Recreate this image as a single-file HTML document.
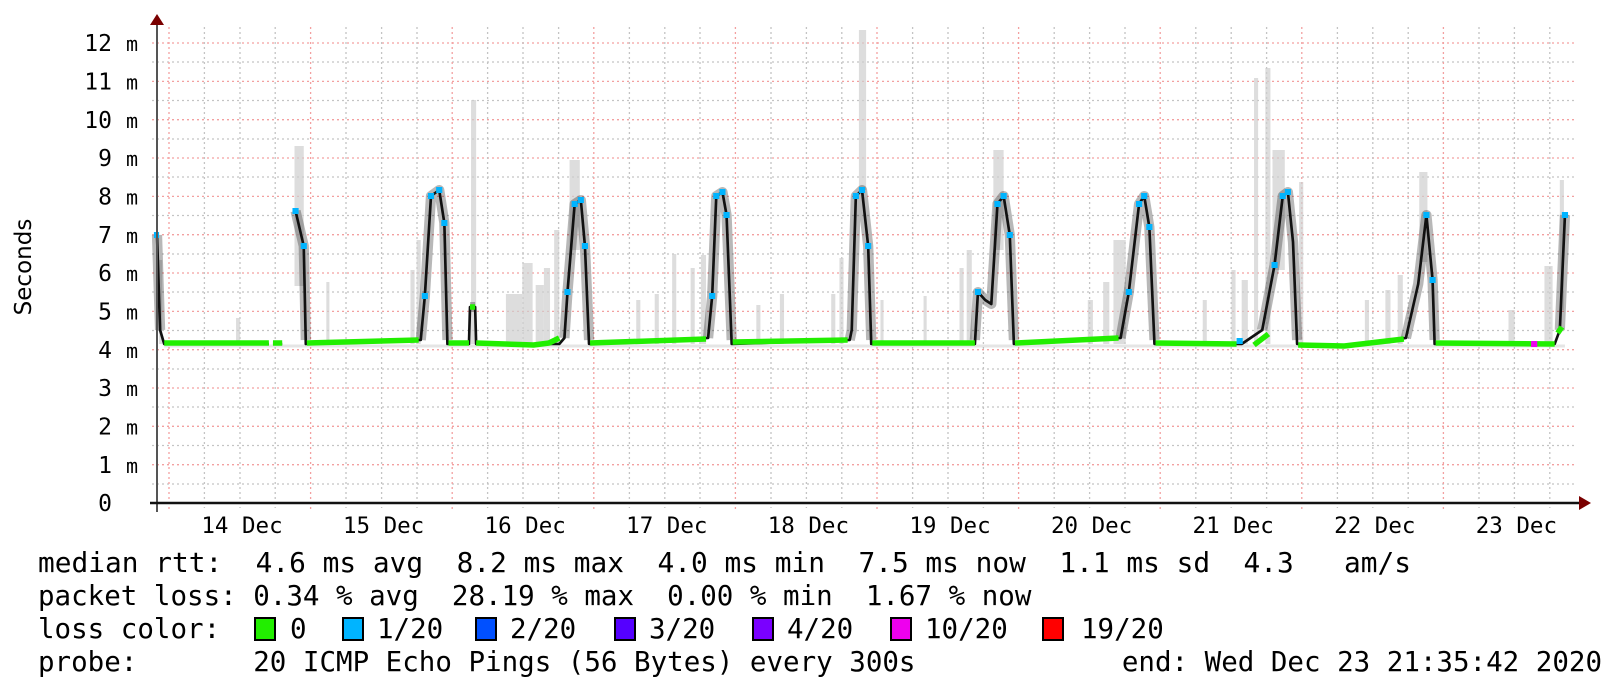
<!DOCTYPE html>
<html><head><meta charset="utf-8"><style>
html,body{margin:0;padding:0;background:#fff;}
svg{display:block;}
.mono{font-family:"DejaVu Sans Mono","Liberation Mono",monospace;fill:#000;}
</style></head><body>
<svg width="1609" height="683" viewBox="0 0 1609 683" xmlns="http://www.w3.org/2000/svg">
<rect width="1609" height="683" fill="#fff"/>
<g stroke="#c4c4c4" stroke-width="1.3" stroke-dasharray="2,3">
<line x1="152" y1="484" x2="1575" y2="484"/><line x1="152" y1="445.5" x2="1575" y2="445.5"/><line x1="152" y1="407" x2="1575" y2="407"/><line x1="152" y1="369" x2="1575" y2="369"/><line x1="152" y1="330.5" x2="1575" y2="330.5"/><line x1="152" y1="292" x2="1575" y2="292"/><line x1="152" y1="254" x2="1575" y2="254"/><line x1="152" y1="215.5" x2="1575" y2="215.5"/><line x1="152" y1="177" x2="1575" y2="177"/><line x1="152" y1="139" x2="1575" y2="139"/><line x1="152" y1="100.5" x2="1575" y2="100.5"/><line x1="152" y1="62" x2="1575" y2="62"/>
</g>
<g stroke="#f3a0a0" stroke-width="1.3" stroke-dasharray="2,3">
<line x1="152" y1="464.7" x2="1575" y2="464.7"/><line x1="152" y1="426.3" x2="1575" y2="426.3"/><line x1="152" y1="388" x2="1575" y2="388"/><line x1="152" y1="349.7" x2="1575" y2="349.7"/><line x1="152" y1="311.4" x2="1575" y2="311.4"/><line x1="152" y1="273" x2="1575" y2="273"/><line x1="152" y1="234.7" x2="1575" y2="234.7"/><line x1="152" y1="196.4" x2="1575" y2="196.4"/><line x1="152" y1="158" x2="1575" y2="158"/><line x1="152" y1="119.7" x2="1575" y2="119.7"/><line x1="152" y1="81.4" x2="1575" y2="81.4"/><line x1="152" y1="43" x2="1575" y2="43"/>
</g>
<g stroke="#c4c4c4" stroke-width="1.3" stroke-dasharray="2,3">
<line x1="204.4" y1="27" x2="204.4" y2="508"/><line x1="240" y1="27" x2="240" y2="508"/><line x1="275.2" y1="27" x2="275.2" y2="508"/>
<line x1="346" y1="27" x2="346" y2="508"/><line x1="381.6" y1="27" x2="381.6" y2="508"/><line x1="417" y1="27" x2="417" y2="508"/>
<line x1="487.6" y1="27" x2="487.6" y2="508"/><line x1="523" y1="27" x2="523" y2="508"/><line x1="558.6" y1="27" x2="558.6" y2="508"/>
<line x1="629.4" y1="27" x2="629.4" y2="508"/><line x1="664.8" y1="27" x2="664.8" y2="508"/><line x1="700" y1="27" x2="700" y2="508"/>
<line x1="771" y1="27" x2="771" y2="508"/><line x1="806.4" y1="27" x2="806.4" y2="508"/><line x1="841.8" y1="27" x2="841.8" y2="508"/>
<line x1="912.6" y1="27" x2="912.6" y2="508"/><line x1="948" y1="27" x2="948" y2="508"/><line x1="983.4" y1="27" x2="983.4" y2="508"/>
<line x1="1054.2" y1="27" x2="1054.2" y2="508"/><line x1="1089.6" y1="27" x2="1089.6" y2="508"/><line x1="1125" y1="27" x2="1125" y2="508"/>
<line x1="1195.8" y1="27" x2="1195.8" y2="508"/><line x1="1231.2" y1="27" x2="1231.2" y2="508"/><line x1="1266.6" y1="27" x2="1266.6" y2="508"/>
<line x1="1337.4" y1="27" x2="1337.4" y2="508"/><line x1="1372.8" y1="27" x2="1372.8" y2="508"/><line x1="1408.2" y1="27" x2="1408.2" y2="508"/>
<line x1="1479" y1="27" x2="1479" y2="508"/><line x1="1514.4" y1="27" x2="1514.4" y2="508"/><line x1="1549.8" y1="27" x2="1549.8" y2="508"/>
</g>
<g stroke="#f3a0a0" stroke-width="1.3" stroke-dasharray="2,3">
<line x1="169" y1="27" x2="169" y2="510"/><line x1="310.6" y1="27" x2="310.6" y2="510"/><line x1="452.2" y1="27" x2="452.2" y2="510"/><line x1="593.8" y1="27" x2="593.8" y2="510"/><line x1="735.4" y1="27" x2="735.4" y2="510"/><line x1="877" y1="27" x2="877" y2="510"/><line x1="1018.6" y1="27" x2="1018.6" y2="510"/><line x1="1160.2" y1="27" x2="1160.2" y2="510"/><line x1="1301.8" y1="27" x2="1301.8" y2="510"/><line x1="1443.4" y1="27" x2="1443.4" y2="510"/>
</g>

<g transform="scale(1.0262,1)">
<g fill="#cfcfcf" opacity="0.7">
<rect x="155" y="260" width="3" height="84"/>
<rect x="230" y="318" width="4" height="26"/>
<rect x="287" y="146" width="9" height="140"/>
<rect x="318" y="282" width="3" height="62"/>
<rect x="400" y="270" width="4" height="74"/>
<rect x="406" y="240" width="4" height="104"/>
<rect x="459" y="100" width="5" height="244"/>
<rect x="493" y="294" width="16" height="50"/>
<rect x="509" y="263" width="10" height="81"/>
<rect x="522" y="285" width="8" height="59"/>
<rect x="530" y="268" width="6" height="76"/>
<rect x="540" y="230" width="5" height="114"/>
<rect x="555" y="160" width="10" height="90"/>
<rect x="620" y="300" width="4" height="44"/>
<rect x="638" y="294" width="4" height="50"/>
<rect x="655" y="254" width="4" height="90"/>
<rect x="673" y="268" width="4" height="76"/>
<rect x="683" y="255" width="5" height="89"/>
<rect x="737" y="305" width="4" height="39"/>
<rect x="760" y="294" width="4" height="50"/>
<rect x="810" y="294" width="4" height="50"/>
<rect x="818" y="258" width="4" height="86"/>
<rect x="837" y="30" width="7" height="160"/>
<rect x="858" y="300" width="3" height="44"/>
<rect x="900" y="296" width="3" height="48"/>
<rect x="935" y="268" width="4" height="76"/>
<rect x="942" y="250" width="5" height="94"/>
<rect x="968" y="150" width="10" height="100"/>
<rect x="1060" y="300" width="5" height="44"/>
<rect x="1075" y="282" width="6" height="62"/>
<rect x="1085" y="240" width="12" height="104"/>
<rect x="1172" y="300" width="4" height="44"/>
<rect x="1200" y="270" width="4" height="74"/>
<rect x="1210" y="280" width="6" height="64"/>
<rect x="1222" y="78" width="4" height="266"/>
<rect x="1233" y="68" width="5" height="276"/>
<rect x="1240" y="150" width="12" height="120"/>
<rect x="1266" y="182" width="4" height="162"/>
<rect x="1330" y="300" width="4" height="44"/>
<rect x="1350" y="290" width="5" height="54"/>
<rect x="1362" y="275" width="5" height="69"/>
<rect x="1383" y="172" width="8" height="90"/>
<rect x="1470" y="310" width="6" height="34"/>
<rect x="1505" y="266" width="8" height="78"/>
<rect x="1520" y="180" width="4" height="130"/>
</g>
<g fill="none" stroke-linejoin="round">
<path d="M153,235 L156,330 M288,211 L296,246 L298,340 M410,340 L414,296 L420,196 L428,190 L433,223 L436,340 M458,307 L463,307 M550,338 L553,292 L560,204 L566,200 L570,246 L574,340 M690,338 L694,296 L698,196 L704,192 L708,215 L713,340 M828,340 L830,330 L834,196 L840,190 L846,246 L849,340 M950,340 L953,292 L960,300 L966,304 L972,204 L978,196 L984,235 L988,340 M1092,338 L1100,292 L1110,204 L1115,196 L1120,227 L1125,340 M1230,330 L1242,265 L1250,196 L1255,192 L1260,242 L1264,340 M1370,338 L1382,284 L1390,215 L1396,280 L1398,340 M1520,330 L1525,215" stroke="#000" stroke-width="10" opacity="0.28"/>
<path d="M160,346 L1525,346" stroke="#000" stroke-width="3" opacity="0.10"/>
<path d="M153,235 L156,330 L160,344 L262,344 M266,344 L275,344 M288,211 L296,246 L298,344 L410,340 L414,296 L420,196 L428,190 L433,223 L436,344 L457,344 L458,307 L463,307 L464,344 L545,344 L550,338 L553,292 L560,204 L566,200 L570,246 L574,344 L690,338 L694,296 L698,196 L704,192 L708,215 L713,344 L828,340 L830,330 L834,196 L840,190 L846,246 L849,344 L950,344 L953,292 L960,300 L966,304 L972,204 L978,196 L984,235 L988,344 L1092,338 L1100,292 L1110,204 L1115,196 L1120,227 L1125,344 L1210,344 L1230,330 L1242,265 L1250,196 L1255,192 L1260,242 L1264,344 L1310,346 L1370,338 L1382,284 L1390,215 L1396,280 L1398,344 L1515,344 L1520,330 L1525,215" stroke="#111" stroke-width="2.6"/>
<path d="M160,343 L262,343 M266,343 L275,343 M299,343 L408,340 M437,343 L457,343 M464,343 L520,345 L535,343 L545,338 M575,343 L688,339 M714,342 L826,340 M850,343 L950,343 M989,343 L1090,338 M1126,343 L1205,344 M1222,345 L1236,334 M1265,345 L1310,346 L1368,339 M1399,343 L1515,344 M458,307 L463,307 M1518,333 L1522,327" stroke="#22ee00" stroke-width="5.5"/>
</g>
<g fill="#00b4ff">
<rect x="150" y="232" width="5" height="6"/>
<rect x="285" y="208" width="6" height="6"/><rect x="293" y="243" width="6" height="6"/>
<rect x="411" y="293" width="6" height="6"/><rect x="417" y="193" width="6" height="6"/><rect x="425" y="187" width="6" height="6"/><rect x="430" y="220" width="6" height="6"/>
<rect x="550" y="289" width="6" height="6"/><rect x="557" y="201" width="6" height="6"/><rect x="563" y="197" width="6" height="6"/><rect x="567" y="243" width="6" height="6"/>
<rect x="691" y="293" width="6" height="6"/><rect x="695" y="193" width="6" height="6"/><rect x="701" y="189" width="6" height="6"/><rect x="705" y="212" width="6" height="6"/>
<rect x="831" y="193" width="6" height="6"/><rect x="837" y="187" width="6" height="6"/><rect x="843" y="243" width="6" height="6"/>
<rect x="950" y="289" width="6" height="6"/><rect x="969" y="201" width="6" height="6"/><rect x="975" y="193" width="6" height="6"/><rect x="981" y="232" width="6" height="6"/>
<rect x="1097" y="289" width="6" height="6"/><rect x="1107" y="201" width="6" height="6"/><rect x="1112" y="193" width="6" height="6"/><rect x="1117" y="224" width="6" height="6"/>
<rect x="1205" y="338" width="6" height="6"/><rect x="1239" y="262" width="6" height="6"/><rect x="1247" y="193" width="6" height="6"/><rect x="1252" y="189" width="6" height="6"/>
<rect x="1387" y="212" width="6" height="6"/><rect x="1393" y="277" width="6" height="6"/>
<rect x="1522" y="212" width="6" height="6"/>
</g>
<rect x="1492" y="341" width="6" height="6" fill="#ee00ee"/>
</g>

<line x1="157" y1="24" x2="157" y2="512" stroke="#555" stroke-width="2"/>
<line x1="150" y1="503" x2="1580" y2="503" stroke="#111" stroke-width="2.5"/>
<polygon points="157,14 150,25 164,25" fill="#7a0000"/>
<polygon points="1591,503 1579,496 1579,510" fill="#7a0000"/>

<g class="mono" font-size="23" text-anchor="end">
<text x="112" y="51">12</text><text x="112" y="89.5">11</text><text x="112" y="128">10</text><text x="112" y="166">9</text><text x="112" y="204.5">8</text><text x="112" y="243">7</text><text x="112" y="281">6</text><text x="112" y="319.5">5</text><text x="112" y="358">4</text><text x="112" y="396">3</text><text x="112" y="434.5">2</text><text x="112" y="473">1</text><text x="112" y="511">0</text>
</g>
<g class="mono" font-size="20" fill="#222">
<text x="126" y="51">m</text><text x="126" y="89.5">m</text><text x="126" y="128">m</text><text x="126" y="166">m</text><text x="126" y="204.5">m</text><text x="126" y="243">m</text><text x="126" y="281">m</text><text x="126" y="319.5">m</text><text x="126" y="358">m</text><text x="126" y="396">m</text><text x="126" y="434.5">m</text><text x="126" y="473">m</text>
</g>
<text transform="translate(31,267) rotate(-90)" text-anchor="middle" font-family="DejaVu Sans, Liberation Sans, sans-serif" font-size="23" fill="#000">Seconds</text>

<g class="mono" font-size="22.5" text-anchor="middle">
<text x="242" y="533">14 Dec</text><text x="383.6" y="533">15 Dec</text><text x="525.2" y="533">16 Dec</text><text x="666.8" y="533">17 Dec</text><text x="808.4" y="533">18 Dec</text><text x="950" y="533">19 Dec</text><text x="1091.6" y="533">20 Dec</text><text x="1233.2" y="533">21 Dec</text><text x="1374.8" y="533">22 Dec</text><text x="1516.4" y="533">23 Dec</text>
</g>

<g class="mono" font-size="27.5">
<text x="38" y="572" textLength="1373" lengthAdjust="spacingAndGlyphs" xml:space="preserve">median rtt:  4.6 ms avg  8.2 ms max  4.0 ms min  7.5 ms now  1.1 ms sd  4.3   am/s</text>
<text x="38" y="605" xml:space="preserve">packet loss: 0.34 % avg  28.19 % max  0.00 % min  1.67 % now</text>
<text x="38" y="638" xml:space="preserve">loss color:</text>
<text x="38" y="671" xml:space="preserve">probe:       20 ICMP Echo Pings (56 Bytes) every 300s</text>
<text x="1602" y="671" text-anchor="end" xml:space="preserve">end: Wed Dec 23 21:35:42 2020</text>
<text x="290" y="638">0</text>
<text x="377" y="638">1/20</text>
<text x="510" y="638">2/20</text>
<text x="649" y="638">3/20</text>
<text x="787" y="638">4/20</text>
<text x="925" y="638">10/20</text>
<text x="1081" y="638">19/20</text>
</g>
<g stroke="#000" stroke-width="2">
<rect x="255" y="618" width="20" height="22" fill="#22ee00"/>
<rect x="343" y="618" width="20" height="22" fill="#00b4ff"/>
<rect x="476" y="618" width="20" height="22" fill="#0050ff"/>
<rect x="615" y="618" width="20" height="22" fill="#5500ff"/>
<rect x="753" y="618" width="20" height="22" fill="#7a00ff"/>
<rect x="891" y="618" width="20" height="22" fill="#ee00ee"/>
<rect x="1043" y="618" width="20" height="22" fill="#ff0000"/>
</g>
</svg>
</body></html>
